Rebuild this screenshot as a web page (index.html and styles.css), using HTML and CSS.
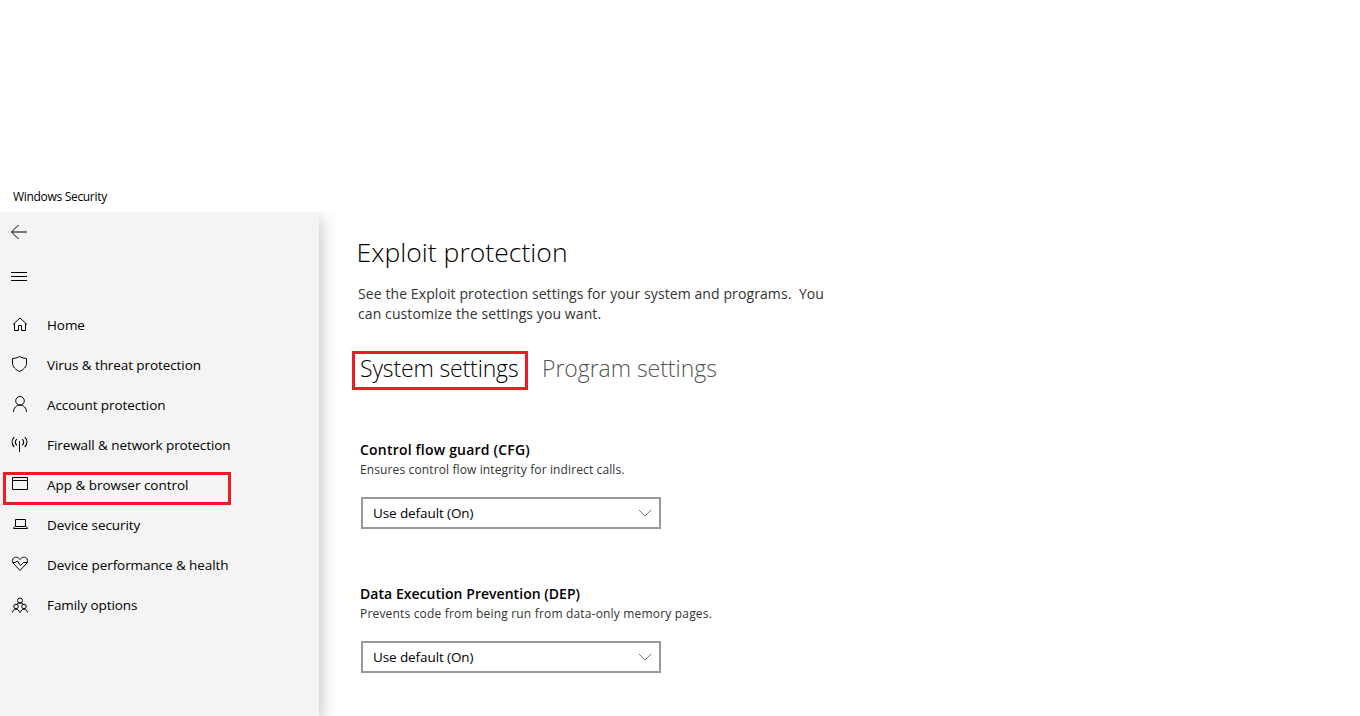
FILE: index.html
```html
<!DOCTYPE html>
<html lang="en">
<head>
<meta charset="utf-8">
<title>Windows Security</title>
<link rel="stylesheet" href="styles.css">
</head>
<body>
<header class="titlebar"><span>Windows Security</span></header>
<div class="window">
  <aside class="sidebar">
    <button class="icon-button back" aria-label="Back"><svg class="icon" viewBox="0 0 18 18"><path stroke="#777" stroke-width="2" d="M2 9H17"/><path d="M8.500 2L1.500 9l7 7"/></svg></button>
    <button class="icon-button menu" aria-label="Menu"><svg class="icon" viewBox="0 0 18 18"><path d="M1 5.500H17M1 9.500H17M1 13.500H17"/></svg></button>
    <nav class="nav">
      <a class="nav-item"><svg class="icon" viewBox="0 0 18 18"><path d="M3 9.500L10 3l7 6.500M4.500 8.500V15.500H8.500V10.500H11.500V15.500H15.500V8.500"/></svg><span>Home</span></a>
      <a class="nav-item"><svg class="icon" viewBox="0 0 18 18"><path d="M9.500 1.500C7.500 2.700 4.500 3.500 2.500 3.500V8C2.500 12 5.500 14.500 9.500 16.500C13.500 14.500 16.500 12 16.500 8V3.500C14.500 3.500 11.500 2.700 9.500 1.500Z"/></svg><span>Virus &amp; threat protection</span></a>
      <a class="nav-item"><svg class="icon" viewBox="0 0 18 18"><circle cx="10" cy="5.800" r="4.300"/><path d="M3.500 17C3.500 12.800 6.500 10.100 10 10.100s6.500 2.700 6.500 6.900"/></svg><span>Account protection</span></a>
      <a class="nav-item"><svg class="icon" viewBox="0 0 18 18"><path d="M9.500 6V17"/><path stroke-width="1.100" d="M4.200 2.200C1.300 5 1.300 9 4.200 12M6.800 4C5 6 5 8.500 6.800 10.300M12.200 4C14 6 14 8.500 12.200 10.300M14.800 2.200C17.700 5 17.700 9 14.800 12"/></svg><span>Firewall &amp; network protection</span></a>
      <a class="nav-item marked"><svg class="icon" viewBox="0 0 18 18"><path d="M2.500 2.500H17.500V14.500H2.500ZM2.500 5.500H17.500"/></svg><span>App &amp; browser control</span></a>
      <a class="nav-item"><svg class="icon" viewBox="0 0 18 18"><path d="M5.500 4.500H15.500V11.500H5.500ZM4.500 11.500L3.500 13.500H17.500L16.500 11.500"/></svg><span>Device security</span></a>
      <a class="nav-item"><svg class="icon" viewBox="0 0 18 18"><path d="M10 4.500C8 1.500 4.500 1.600 3 3.700C1.600 6 3 8 4 9l6 6.500L16 9C17 8 18.400 6 17 3.700C15.500 1.600 12 1.500 10 4.500M2.500 7.500H5L7.500 6l3 4.500 3-3H17.500"/></svg><span>Device performance &amp; health</span></a>
      <a class="nav-item family"><svg class="icon" viewBox="0 0 18 18"><circle cx="10" cy="4.500" r="2.500"/><circle cx="6" cy="10.500" r="2.300"/><circle cx="14" cy="10.500" r="2.300"/><path d="M6.500 8.500C7.500 6.500 12.500 6.500 13.500 8.500M2.500 16.500C3 12 9 12 9.500 16.500M10.500 16.500C11 12 17 12 17.500 16.500"/></svg><span>Family options</span></a>
    </nav>
  </aside>
  <main class="content">
    <h1 class="page-title">Exploit protection</h1>
    <p class="intro">See the Exploit protection settings for your system and programs.&nbsp; You<br>can customize the settings you want.</p>
    <div class="tabs">
      <span class="tab active">System settings</span>
      <span class="tab">Program settings</span>
    </div>
    <section class="setting cfg">
      <h2 class="setting-title">Control flow guard (CFG)</h2>
      <p class="setting-text">Ensures control flow integrity for indirect calls.</p>
      <div class="select"><span>Use default (On)</span><svg class="chevron" viewBox="0 0 14 8"><path d="M1 1l6 6 6-6"/></svg></div>
    </section>
    <section class="setting dep">
      <h2 class="setting-title">Data Execution Prevention (DEP)</h2>
      <p class="setting-text">Prevents code from being run from data-only memory pages.</p>
      <div class="select"><span>Use default (On)</span><svg class="chevron" viewBox="0 0 14 8"><path d="M1 1l6 6 6-6"/></svg></div>
    </section>
  </main>
</div>
</body>
</html>
```
FILE: styles.css
```css
*, *::after { box-sizing: border-box; }
body {
  margin: 0;
  height: 716px;
  overflow: hidden;
  display: flex;
  flex-direction: column;
  background: #fff;
  color: #000;
  font-family: "Open Sans", "Noto Sans", sans-serif;
  font-size: 13.5px;
}
h1, h2, p { margin: 0; white-space: nowrap; }
.titlebar {
  height: 212px;
  flex: none;
  padding: 187px 0 0 13px;
  font-size: 12px;
  line-height: 20px;
  letter-spacing: -.31px;
}
.window { display: flex; flex: 1; }
.sidebar {
  width: 319px;
  flex: none;
  background: #f4f4f4;
  box-shadow: 2px 6px 16px rgba(0, 0, 0, .24);
  clip-path: inset(0 -30px 0 0);
}
.icon-button {
  display: block;
  border: 0;
  padding: 0 0 0 10px;
  background: none;
  height: 40px;
}
.menu { margin-top: 4px; }
.icon, .chevron { display: block; fill: none; stroke: #000; }
.icon { width: 18px; height: 18px; }
.nav { margin-top: 9px; letter-spacing: -.08px; }
.nav-item {
  height: 40px;
  display: flex;
  align-items: center;
  padding-left: 10px;
  position: relative;
  white-space: nowrap;
}
.nav-item .icon { margin: 0 19px 2px 0; }
.nav-item.family .icon { margin-bottom: 0; }
.marked { letter-spacing: -.03px; }
.marked::after {
  content: "";
  position: absolute;
  left: 3px;
  top: 7px;
  width: 228px;
  height: 33px;
  border: 3px solid #ed1c24;
}
.content { padding-left: 38px; }
.page-title {
  margin: 22px 0 0 -.5px;
  font-size: 26.5px;
  line-height: 36px;
  font-weight: 300;
  letter-spacing: .03px;
}
.intro {
  margin: 14px 0 0 1px;
  font-size: 14px;
  line-height: 20px;
  letter-spacing: .095px;
  color: #333;
}
.tabs {
  display: flex;
  margin: 27px 0 0 -5px;
  font-size: 23px;
  font-weight: 300;
  letter-spacing: -.1px;
}
.tab {
  height: 39px;
  line-height: 30px;
  padding: 2px 0;
  white-space: nowrap;
  color: #555;
  letter-spacing: -.04px;
}
.tab.active {
  width: 176px;
  margin-right: 14px;
  padding: 0 5px;
  border: 3px solid #ed1c24;
  line-height: 29px;
  color: #000;
  letter-spacing: -.14px;
}
.setting { margin: 50px 0 0 3px; height: 94px; }
.tabs + .setting { margin-top: 49px; }
.setting-title { font-size: 14px; line-height: 22px; font-weight: 600; }
.setting-text { font-size: 12px; line-height: 18px; color: #333; }
.cfg .setting-title { letter-spacing: .2px; }
.cfg .setting-text { letter-spacing: .12px; }
.dep .setting-title { letter-spacing: .04px; }
.dep .setting-text { letter-spacing: .18px; }
.select {
  display: flex;
  align-items: center;
  justify-content: space-between;
  width: 300px;
  height: 32px;
  margin: 18px 0 0 1px;
  padding: 0 7px 0 10px;
  border: 2px solid #999;
  letter-spacing: -.1px;
}
.chevron { width: 14px; height: 8px; stroke: #777; }
```
